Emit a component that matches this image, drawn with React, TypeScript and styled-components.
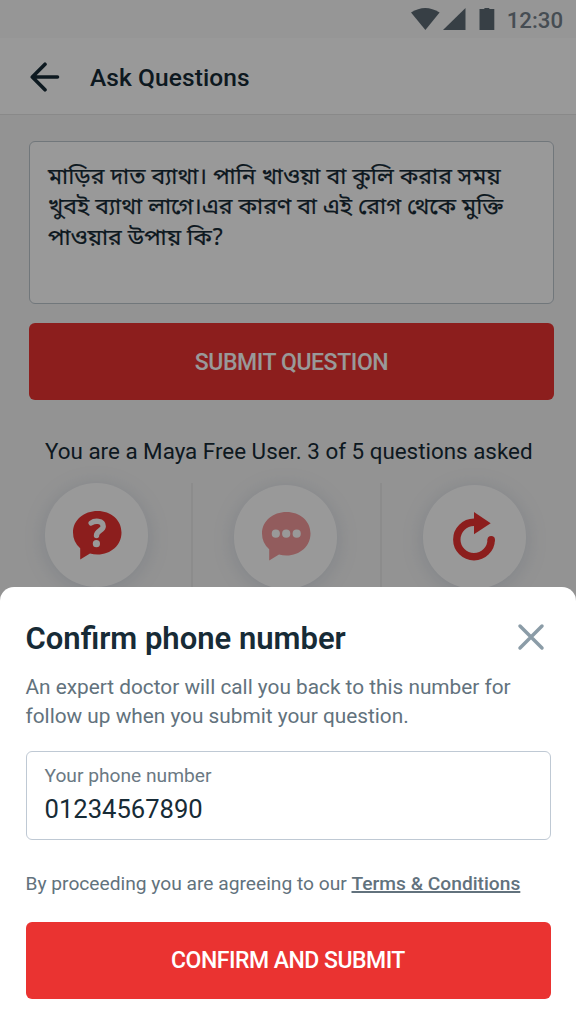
import React from "react";
import styled, { createGlobalStyle } from "styled-components";

const GlobalStyle = createGlobalStyle`
  * { box-sizing: border-box; }
  body { margin: 0; font-family: Roboto, "Noto Sans", sans-serif; color: #172b36; }
  h1, h2, p { margin: 0; }
  svg { display: block; }
`;

const Screen = styled.div`
  position: relative;
  width: 576px;
  height: 1024px;
  overflow: hidden;
  background: #f5f5f5;
`;

const StatusBar = styled.div`
  height: 38px;
  padding: 0 13px 0 0;
  display: flex;
  align-items: center;
  justify-content: flex-end;
  background: #fafafa;
  color: #5c6a74;
`;

const Clock = styled.span`
  margin-left: 11.5px;
  padding-top: 2px;
  font-size: 22.2px;
  font-weight: 500;
  line-height: 36px;
  color: #75818b;
`;

const Header = styled.header`
  height: 77px;
  padding: 2px 0 0 29px;
  display: flex;
  align-items: center;
  gap: 29px;
  background: #fff;
  border-bottom: 1px solid #e4e4e4;
`;

const HeaderTitle = styled.h1`
  padding-top: 1px;
  font-size: 24.5px;
  font-weight: 500;
  line-height: 32px;
  letter-spacing: 0.1px;
  white-space: nowrap;
`;

const Content = styled.main`
  padding: 26px 22px 0 29px;
`;

const QuestionBox = styled.div`
  height: 163px;
  padding: 21px 18px;
  border: 1.5px solid #bcc6ce;
  border-radius: 6px;
  background: #fff;
  font-family: "Noto Sans Bengali", "Noto Sans", sans-serif;
  font-size: 23px;
  line-height: 30.3px;
  -webkit-text-stroke: 0.2px #172b36;
  white-space: nowrap;
`;

const Button = styled.button<{ $spacing: number }>`
  display: flex;
  align-items: center;
  justify-content: center;
  width: 525px;
  height: 77px;
  padding: 1px 0 0;
  border: 0;
  border-radius: 6px;
  background: #ea3331;
  color: #fff;
  font-family: Roboto, sans-serif;
  font-size: 23px;
  font-weight: 500;
  letter-spacing: ${(p) => p.$spacing}px;
`;

const Submit = styled.div`
  margin-top: 19px;
`;

const Quota = styled.p`
  margin: 36px 0 0 16px;
  font-size: 22.4px;
  line-height: 31px;
  white-space: nowrap;
`;

const Actions = styled.div`
  display: grid;
  grid-template-columns: 189px 189px 189px;
  width: 567px;
  margin: 16px 0 0 -27px;
`;

const Action = styled.div<{ $top: number }>`
  display: flex;
  justify-content: center;
  height: 170px;
  padding: ${(p) => p.$top}px 0 0 0;
  & + & {
    padding-right: 2.5px;
    border-left: 2px solid #e9e9ea;
  }
`;

const Circle = styled.div<{ $inset?: string }>`
  display: flex;
  align-items: center;
  justify-content: center;
  width: 103.5px;
  height: 103.5px;
  padding: ${(p) => p.$inset || "0 0 1px"};
  border-radius: 50%;
  background: #fff;
  box-shadow: 0 3px 20px rgba(125, 145, 175, 0.25);
`;

const Scrim = styled.div`
  position: absolute;
  inset: 0;
  background: rgba(0, 0, 0, 0.4);
`;

const Sheet = styled.section`
  position: absolute;
  left: 0;
  right: 0;
  bottom: 0;
  height: 437px;
  padding: 32px 25.5px 0;
  border-radius: 14px 14px 0 0;
  background: #fff;
`;

const SheetHead = styled.div`
  display: flex;
  align-items: center;
  justify-content: space-between;
  height: 38px;
  padding-right: 5.5px;
`;

const SheetTitle = styled.h2`
  padding-top: 2px;
  font-size: 31px;
  font-weight: 600;
  line-height: 38px;
  letter-spacing: 0;
  white-space: nowrap;
`;

const CloseButton = styled.button`
  padding: 0;
  border: 0;
  background: none;
  margin-top: -2px;
`;

const Description = styled.p`
  margin-top: 16px;
  font-size: 20.8px;
  line-height: 29px;
  color: #62727d;
  white-space: nowrap;
`;

const PhoneField = styled.div`
  height: 89px;
  margin-top: 19.5px;
  width: 525px;
  padding: 11px 18px;
  border: 1.5px solid #bfc9d4;
  border-radius: 6px;
`;

const FieldLabel = styled.div`
  font-size: 19.2px;
  line-height: 26px;
  color: #6b7983;
`;

const FieldValue = styled.div`
  margin-top: 4px;
  font-size: 25.6px;
  line-height: 32px;
`;

const Terms = styled.p`
  margin: 30px 0 25px;
  font-size: 19.2px;
  line-height: 27px;
  color: #62727d;
  white-space: nowrap;
`;

const TermsLink = styled.a`
  font-weight: 500;
  text-decoration: underline;
  text-decoration-thickness: 1.5px;
  text-underline-offset: 1px;
  text-decoration-skip-ink: none;
`;

const StatusIcons = () => (
  <svg width="84" height="26" viewBox="0 0 84 26" fill="currentColor">
    <path d="M0 6.5Q14.2-2.6 28.6 6.5L14.4 24Z" />
    <path d="M54.5 2V24H32Z" />
    <path d="M68.5 3H73.4V2H78.3V3H83.3V24H68.5Z" />
  </svg>
);

const BackArrow = () => (
  <svg width="32" height="30" viewBox="0 0 32 30" fill="none" stroke="#172b36" strokeWidth="3.6" strokeLinecap="round" strokeLinejoin="round">
    <path d="M16 2.2L3.3 15L16 27.8M3.5 15H28.5" />
  </svg>
);

const bubble = "M24.5 0C38 0 48.5 9 48.5 21.5S38 43.5 24.5 43.5Q20.5 43.5 17 42.5L7.2 48.5V37.3Q0 31 0 21.5C0 9 11 0 24.5 0Z";

const QuestionBubble = () => (
  <svg width="49" height="49" viewBox="0 0 49 49">
    <path d={bubble} fill="#ea3331" />
    <path d="M18.2 12C21.5 9.4 30.2 9 30.2 15.3C30.2 19.8 23.5 19.4 23.5 24.6" fill="none" stroke="#fff" strokeWidth="5.4" strokeLinecap="round" />
    <circle cx="23.4" cy="32.7" r="3.6" fill="#fff" />
  </svg>
);

const ChatBubble = () => (
  <svg width="49" height="49" viewBox="0 0 49 49">
    <path d={bubble} fill="#f4999b" />
    <circle cx="13.8" cy="21.7" r="4.1" fill="#fff" />
    <circle cx="24.2" cy="21.7" r="4.1" fill="#fff" />
    <circle cx="34.7" cy="21.7" r="4.1" fill="#fff" />
  </svg>
);

const Redo = () => (
  <svg width="42" height="49" viewBox="0 0 42 49">
    <path d="M22 10.3H21A17.2 17.2 0 1 0 38.2 27.5" fill="none" stroke="#ea3331" strokeWidth="7.4" />
    <circle cx="38.2" cy="27.6" r="3.7" fill="#ea3331" />
    <path d="M21 0L37.7 11.2L21 22.3Z" fill="#ea3331" />
  </svg>
);

const CloseIcon = () => (
  <svg width="28" height="28" viewBox="0 0 28 28" stroke="#8b9ca7" strokeWidth="3.5" strokeLinecap="round">
    <path d="M3 3L25 25M25 3L3 25" />
  </svg>
);

export default function App() {
  return (
    <Screen>
      <GlobalStyle />
      <StatusBar>
        <StatusIcons />
        <Clock>12:30</Clock>
      </StatusBar>
      <Header>
        <BackArrow />
        <HeaderTitle>Ask Questions</HeaderTitle>
      </Header>
      <Content>
        <QuestionBox>
          মাড়ির দাত ব্যাথা। পানি খাওয়া বা কুলি করার সময়
          <br />
          খুবই ব্যাথা লাগে।এর কারণ বা এই রোগ থেকে মুক্তি
          <br />
          পাওয়ার উপায় কি?
        </QuestionBox>
        <Submit>
          <Button $spacing={-0.4}>SUBMIT QUESTION</Button>
        </Submit>
        <Quota>You are a Maya Free User. 3 of 5 questions asked</Quota>
        <Actions>
          <Action $top={0}>
            <Circle $inset="1px 0 0 2px"><QuestionBubble /></Circle>
          </Action>
          <Action $top={2}>
            <Circle $inset="0 0 1px 2px"><ChatBubble /></Circle>
          </Action>
          <Action $top={2}>
            <Circle><Redo /></Circle>
          </Action>
        </Actions>
      </Content>
      <Scrim />
      <Sheet>
        <SheetHead>
          <SheetTitle>Confirm phone number</SheetTitle>
          <CloseButton aria-label="Close"><CloseIcon /></CloseButton>
        </SheetHead>
        <Description>
          An expert doctor will call you back to this number for
          <br />
          follow up when you submit your question.
        </Description>
        <PhoneField>
          <FieldLabel>Your phone number</FieldLabel>
          <FieldValue>01234567890</FieldValue>
        </PhoneField>
        <Terms>
          By proceeding you are agreeing to our <TermsLink>Terms &amp; Conditions</TermsLink>
        </Terms>
        <Button $spacing={-0.5}>CONFIRM AND SUBMIT</Button>
      </Sheet>
    </Screen>
  );
}
